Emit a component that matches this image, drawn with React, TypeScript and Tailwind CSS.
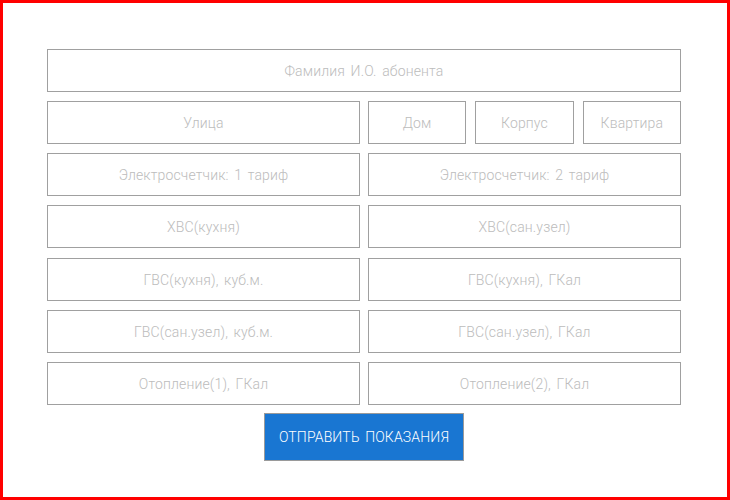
const field =
  "h-[43px] w-full border border-[#a0a0a0] bg-white text-center text-[14px] font-light tracking-[0.15px] [word-spacing:2px] text-[#555] placeholder:text-[#bcbcbc] outline-none";

function Field({ placeholder }: { placeholder: string }) {
  return <input type="text" placeholder={placeholder} className={field} />;
}

// meter readings, left and right column; mt is the spacing above each row
const pairs: { left: string; right: string; mt: string }[] = [
  { left: "Электросчетчик: 1 тариф", right: "Электросчетчик: 2 тариф", mt: "mt-[9px]" },
  { left: "ХВС(кухня)", right: "ХВС(сан.узел)", mt: "mt-[9px]" },
  { left: "ГВС(кухня), куб.м.", right: "ГВС(кухня), ГКал", mt: "mt-[10px]" },
  { left: "ГВС(сан.узел), куб.м.", right: "ГВС(сан.узел), ГКал", mt: "mt-[9px]" },
  { left: "Отопление(1), ГКал", right: "Отопление(2), ГКал", mt: "mt-[9px]" },
];

export default function App() {
  return (
    <div
      className="w-[730px] h-[500px] border-[3px] border-[#ff0000] bg-white pl-[44px] pt-[46px]"
      style={{ fontFamily: 'Roboto, "Liberation Sans", Arial, sans-serif' }}
    >
      <form className="w-[634px] flex flex-col" onSubmit={(e) => e.preventDefault()}>
        <Field placeholder="Фамилия И.О. абонента" />

        <div className="mt-[9px] grid grid-cols-2 gap-[8px]">
          <Field placeholder="Улица" />
          <div className="grid grid-cols-3 gap-[9px]">
            <Field placeholder="Дом" />
            <Field placeholder="Корпус" />
            <Field placeholder="Квартира" />
          </div>
        </div>

        {pairs.map((p) => (
          <div key={p.left} className={`${p.mt} grid grid-cols-2 gap-[8px]`}>
            <Field placeholder={p.left} />
            <Field placeholder={p.right} />
          </div>
        ))}

        <div className="mt-[8px] flex justify-center">
          <button
            type="submit"
            className="w-[200px] h-[48px] border border-[#9a9a9a] bg-[#1976d2] text-white text-[14px] font-light tracking-[0.15px] [word-spacing:2px] uppercase"
          >
            Отправить показания
          </button>
        </div>
      </form>
    </div>
  );
}
